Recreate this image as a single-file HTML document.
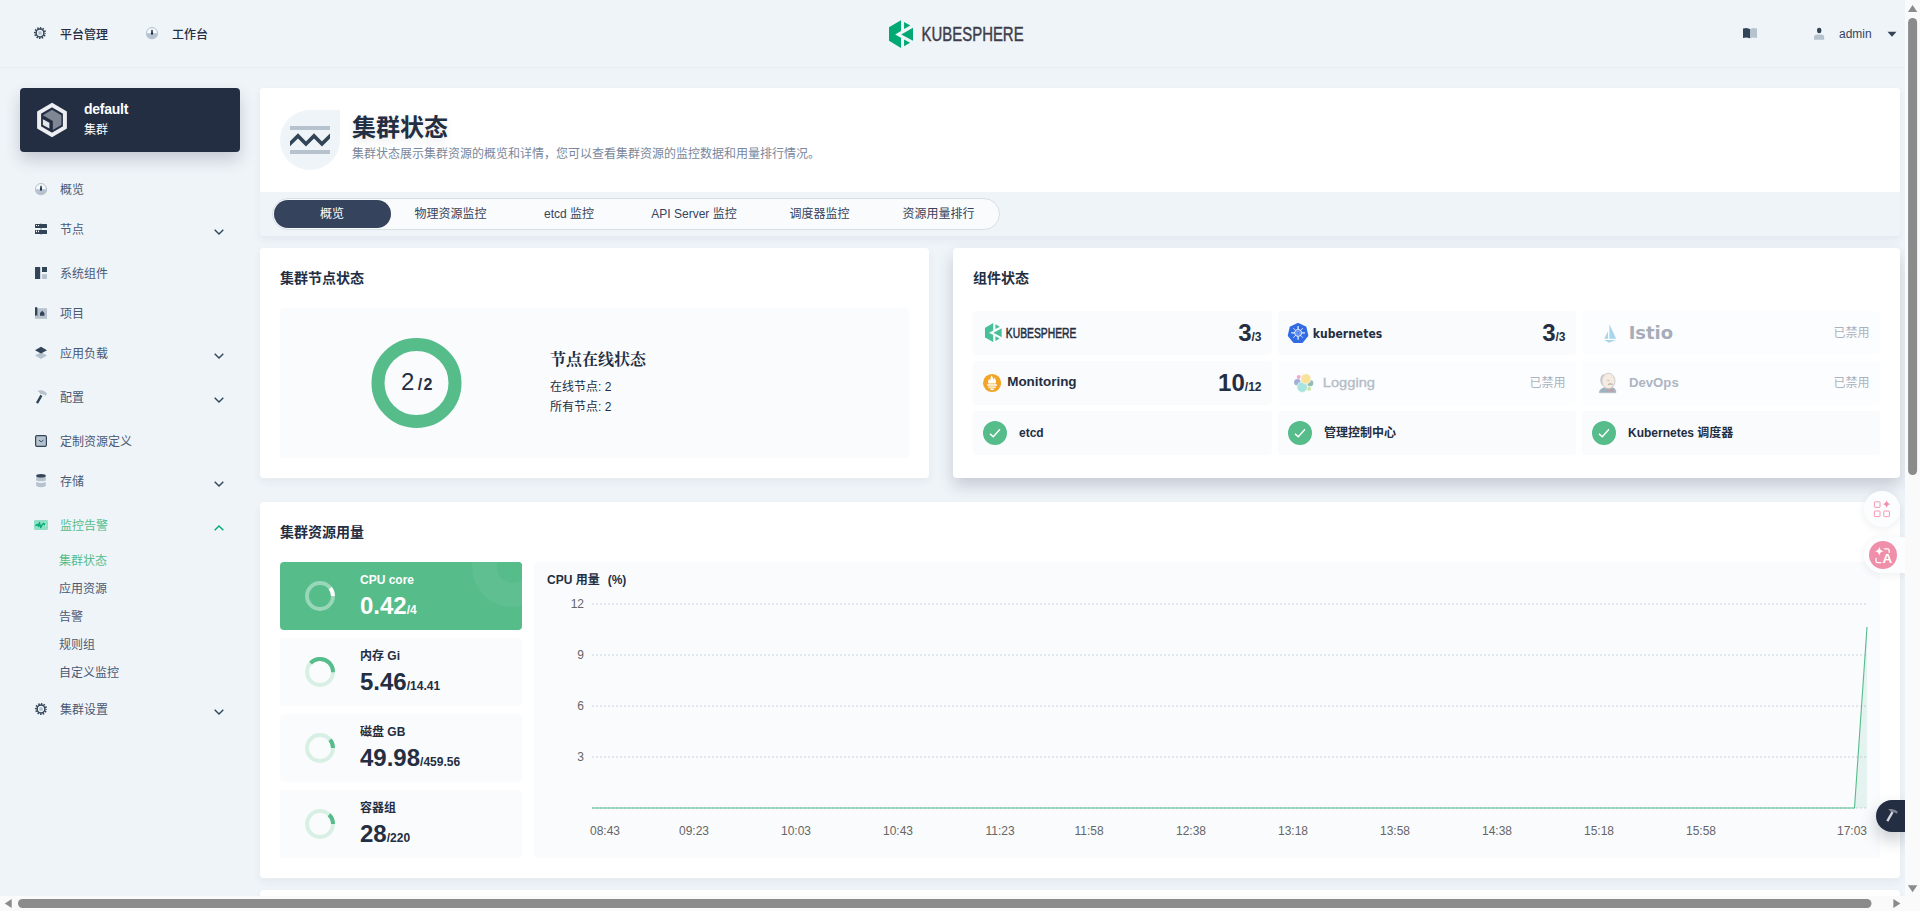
<!DOCTYPE html>
<html lang="zh">
<head>
<meta charset="utf-8">
<title>KubeSphere</title>
<style>
*{box-sizing:border-box;margin:0;padding:0}
html,body{width:1920px;height:911px;overflow:hidden}
body{background:#eff4f9;color:#242e42;font-family:"Liberation Sans","Noto Sans CJK SC",sans-serif;font-size:12px;line-height:20px;position:relative}
.abs{position:absolute}
svg{display:block}
/* header */
#hdr{position:absolute;left:0;top:0;width:1905px;height:68px;border-bottom:1px solid #e9eef4}
.hnav{position:absolute;top:25px;height:20px;font-weight:500;font-size:12px;color:#242e42;white-space:nowrap}
/* sidebar */
#cluster{position:absolute;left:20px;top:88px;width:220px;height:64px;border-radius:4px;background:#242e42;box-shadow:0 8px 16px 0 rgba(36,46,66,.2)}
.nav{position:absolute;left:60px;height:20px;font-size:12px;color:#4a5974;white-space:nowrap;font-weight:400}
.nav.sub{left:59px;color:#4a5974}
.nav.on{color:#55bc8a}
.nico{position:absolute;left:33px;width:16px;height:16px}
.chev{position:absolute;left:213px;width:12px;height:12px}
/* cards */
.card{position:absolute;background:#fff;border-radius:4px;box-shadow:0 4px 8px 0 rgba(36,46,66,.06)}
.ctitle{position:absolute;font-size:14px;font-weight:700;color:#242e42;line-height:20px;white-space:nowrap}
.lbox{position:absolute;background:#f9fbfd;border-radius:4px}
.t{position:absolute;white-space:nowrap}
.tab{top:5px;margin-left:-.5px;height:20px;line-height:20px;text-align:center;font-size:12px;color:#36435c}
</style>
</head>
<body>

<!-- ================= HEADER ================= -->
<svg width="0" height="0" style="position:absolute">
  <defs>
    <symbol id="kslogo" viewBox="9 6 24.2 28">
      <path fill="#00a971" d="M20.98 6.15L9 13.17V26.78L20.98 34V23.7L15.14 20.4L20.98 16.9Z"/>
      <path fill="#00a971" d="M24.06 7.9V14.9L30.3 11.5Z"/>
      <path fill="#00a971" d="M21.3 20.4L33.1 13.6V26.9Z"/>
      <path fill="#00a971" d="M24.06 25.5V32.3L30.07 28.8Z"/>
    </symbol>
    <symbol id="gear" viewBox="-8 -8 16 16">
      <circle r="2" fill="#b6c2cd"/>
      <circle r="3.9" fill="none" stroke="#324558" stroke-width="1.5"/>
      <circle r="5.1" fill="none" stroke="#324558" stroke-width="1.9" stroke-dasharray="1.4 1.27" stroke-dashoffset=".7"/>
    </symbol>
    <symbol id="dash" viewBox="-8 -8 16 16">
      <circle r="5.5" fill="#f5f8fb" stroke="#b6c2cd" stroke-width="1"/>
      <path d="M-6 0.2A6 6 0 0 0 6 0.2Z" fill="#b6c2cd"/>
      <path d="M-.6 -3.2h1.2l.5 3.9a1.1 1.1 0 0 1-2.2 0z" fill="#1f3350"/>
    </symbol>
  </defs>
</svg>
<div id="hdr">
  <svg class="abs" style="left:32px;top:25px" width="16" height="16"><use href="#gear"/></svg>
  <div class="hnav" style="left:60px">平台管理</div>
  <svg class="abs" style="left:144px;top:25px" width="16" height="16"><use href="#dash"/></svg>
  <div class="hnav" style="left:172px">工作台</div>
  <svg class="abs" style="left:889px;top:20px" width="24.2" height="28"><use href="#kslogo"/></svg>
  <svg class="abs" style="left:918px;top:20px" width="112" height="28"><text x="3.6" y="21.4" font-family="'Liberation Sans',sans-serif" font-size="19.8" fill="#3e3d49" stroke="#3e3d49" stroke-width=".45" textLength="102" lengthAdjust="spacingAndGlyphs">KUBESPHERE</text></svg>
  <svg class="abs" style="left:1742px;top:27px" width="16" height="12" viewBox="0 0 16 12"><path d="M1 1.6L4.5 1.1L8 1.9V11.3L4.5 10.6L1 11Z" fill="#324558"/><path d="M8 1.9L11.5 1.1L15 1.6V11L11.5 10.6L8 11.3Z" fill="#b6c2cd"/></svg>
  <svg class="abs" style="left:1811px;top:26px" width="16" height="16" viewBox="0 0 16 16"><rect x="6" y="1.8" width="4.4" height="5.4" rx="2.2" fill="#324558"/><path d="M3 13.7V11.5a3 3 0 0 1 3-3h4.2a3 3 0 0 1 3 3v2.2z" fill="#b6c2cd"/></svg>
  <div class="t" style="left:1839px;top:24px;font-size:12px;color:#36435c">admin</div>
  <svg class="abs" style="left:1887px;top:31px" width="10" height="6" viewBox="0 0 10 6"><path d="M.5 .7h9L5 5.8z" fill="#324558"/></svg>
</div>

<!-- ================= SIDEBAR ================= -->
<div id="cluster">
  <svg class="abs" style="left:0;top:0" width="80" height="64" viewBox="20 88 80 64">
    <path d="M52 105.1L64.9 112.55V127.45L52 134.9L39.1 127.45V112.55Z" fill="none" stroke="#eceef1" stroke-width="4" stroke-linejoin="miter"/>
    <path d="M52 109.8L61.4 115.2V124.9L52.8 129.9V121L42.8 115.3Z" fill="#7f8794"/>
    <path d="M42.9 119.3L49.4 122.8V128.6L42.9 124.9Z" fill="#e4e6ea"/>
  </svg>
  <div class="t" style="left:64px;top:11px;font-size:14px;font-weight:700;color:#fff;line-height:20px;letter-spacing:-.25px">default</div>
  <div class="t" style="left:64px;top:32px;font-size:12px;color:#fff;line-height:20px">集群</div>
</div>

<div id="side">
  <div class="nav" style="top:180px">概览</div>
  <div class="nav" style="top:220px">节点</div>
  <div class="nav" style="top:264px">系统组件</div>
  <div class="nav" style="top:304px">项目</div>
  <div class="nav" style="top:344px">应用负载</div>
  <div class="nav" style="top:388px">配置</div>
  <div class="nav" style="top:432px">定制资源定义</div>
  <div class="nav" style="top:472px">存储</div>
  <div class="nav on" style="top:516px">监控告警</div>
  <div class="nav sub on" style="top:551px">集群状态</div>
  <div class="nav sub" style="top:579px">应用资源</div>
  <div class="nav sub" style="top:607px">告警</div>
  <div class="nav sub" style="top:635px">规则组</div>
  <div class="nav sub" style="top:663px">自定义监控</div>
  <div class="nav" style="top:700px">集群设置</div>
  <svg class="abs" style="left:33px;top:181px" width="16" height="16"><use href="#dash"/></svg>
  <svg class="abs" style="left:33px;top:221px" width="16" height="16" viewBox="0 0 16 16"><rect x="7" y="2.2" width="2" height="11.6" fill="#b6c2cd"/><rect x="2" y="3" width="12" height="4" rx=".5" fill="#324558"/><rect x="2" y="9" width="12" height="4" rx=".5" fill="#324558"/><rect x="3" y="4" width="1" height="1" fill="#fff"/><rect x="5" y="4" width="1" height="1" fill="#fff"/><rect x="3" y="9.6" width="1" height="1.6" fill="#fff"/><rect x="5" y="9.6" width="1" height="1.6" fill="#fff"/></svg>
  <svg class="abs" style="left:33px;top:265px" width="16" height="16" viewBox="0 0 16 16"><rect x="2" y="2" width="5.2" height="12" fill="#324558"/><rect x="9" y="2" width="5" height="5" fill="#324558"/><rect x="9" y="9.2" width="5" height="4.8" fill="#b6c2cd"/></svg>
  <svg class="abs" style="left:33px;top:305px" width="16" height="16" viewBox="0 0 16 16"><rect x="2" y="3.2" width="12" height="10.6" fill="#b6c2cd"/><path d="M2 3.2a1.2 1.2 0 0 1 2.4 0V11.2a1.2 1.2 0 0 0-2.4 1z" fill="#324558"/><path d="M7 10.8V8l2.2-2.2L11.4 8v2.8z" fill="#324558"/></svg>
  <svg class="abs" style="left:33px;top:345px" width="16" height="16" viewBox="0 0 16 16"><path d="M2 10.4L8 7l6 3.4L8 13.9z" fill="#b6c2cd"/><path d="M2 5.2L8 1.8l6 3.4L8 8.6z" fill="#324558"/></svg>
  <svg class="abs" style="left:33px;top:389px" width="16" height="16" viewBox="0 0 16 16"><path d="M4.5 2.1C6 1.2 8 1 9.6 1.6C11.4 2.2 12.8 3.2 13.9 4.4L12.8 6.9C11.8 5.9 10.6 5.4 9.4 5.3L7.4 5C6.8 3.8 5.8 2.9 4.5 2.1Z" fill="#b6c2cd"/><path d="M8.4 6.4L4 14.2" stroke="#324558" stroke-width="2.4" fill="none"/></svg>
  <svg class="abs" style="left:33px;top:433px" width="16" height="16" viewBox="0 0 16 16"><rect x="2.6" y="2.6" width="10.8" height="10.8" rx="1.4" fill="#b6c2cd" stroke="#324558" stroke-width="1.2"/><path d="M6 7.2L8.2 8.8L10.4 7.2" fill="none" stroke="#324558" stroke-width="1"/></svg>
  <svg class="abs" style="left:33px;top:473px" width="16" height="16" viewBox="0 0 16 16"><path d="M3.2 2.8V7.4Q8 9.2 12.8 7.4V2.8Z" fill="#b6c2cd"/><path d="M3.2 9Q8 10.8 12.8 9V13Q8 15.4 3.2 13Z" fill="#b6c2cd"/><ellipse cx="8" cy="2.8" rx="4.8" ry="1.8" fill="#324558"/></svg>
  <svg class="abs" style="left:33px;top:517px" width="16" height="16" viewBox="0 0 16 16"><rect x="1" y="3" width="14" height="10" rx="1.2" fill="#90e0c5"/><path d="M2.8 8.5L4.4 7.4L5.6 9.3L6.5 5.4L7.6 10.7L8.8 8.4L10.4 6.3L11.8 7.8" fill="none" stroke="#00aa72" stroke-width="1.3" stroke-linejoin="round" stroke-linecap="round"/><circle cx="12.6" cy="8.4" r=".6" fill="#fff"/></svg>
  <svg class="abs" style="left:33px;top:701px" width="16" height="16"><use href="#gear"/></svg>
  <svg class="abs" style="left:213px;top:228px" width="12" height="8" viewBox="0 0 12 8"><path d="M1.7 1.8L6 6.1L10.3 1.8" fill="none" stroke="#324558" stroke-width="1.4"/></svg>
  <svg class="abs" style="left:213px;top:352px" width="12" height="8" viewBox="0 0 12 8"><path d="M1.7 1.8L6 6.1L10.3 1.8" fill="none" stroke="#324558" stroke-width="1.4"/></svg>
  <svg class="abs" style="left:213px;top:396px" width="12" height="8" viewBox="0 0 12 8"><path d="M1.7 1.8L6 6.1L10.3 1.8" fill="none" stroke="#324558" stroke-width="1.4"/></svg>
  <svg class="abs" style="left:213px;top:480px" width="12" height="8" viewBox="0 0 12 8"><path d="M1.7 1.8L6 6.1L10.3 1.8" fill="none" stroke="#324558" stroke-width="1.4"/></svg>
  <svg class="abs" style="left:213px;top:708px" width="12" height="8" viewBox="0 0 12 8"><path d="M1.7 1.8L6 6.1L10.3 1.8" fill="none" stroke="#324558" stroke-width="1.4"/></svg>
  <svg class="abs" style="left:213px;top:524px" width="12" height="8" viewBox="0 0 12 8"><path d="M1.7 6.2L6 1.9L10.3 6.2" fill="none" stroke="#00aa72" stroke-width="1.4"/></svg>
</div>

<!-- ================= MAIN ================= -->
<div class="card" id="banner" style="left:260px;top:88px;width:1640px;height:148px;background:#eff4f9">
  <div class="abs" style="left:0;top:0;width:1640px;height:104px;background:#fff;border-radius:4px 4px 0 0"></div>
  <div class="abs" style="left:20px;top:22px;width:60px;height:60px;border-radius:30px 0 30px 30px;background:#eff4f9">
    <svg class="abs" style="left:10px;top:10px" width="40" height="40" viewBox="290 120 40 40"><rect x="290" y="126" width="40" height="4" fill="#b6c2cd"/><rect x="290" y="150" width="40" height="4" fill="#b6c2cd"/><path d="M288 145.6L298 135.9L306 143.9L314 135.9L322 143.9L332 134" fill="none" stroke="#324558" stroke-width="3.6"/></svg>
  </div>
  <div class="t" style="left:92px;top:24px;font-size:24px;line-height:32px;font-weight:700;color:#242e42;text-shadow:0 4px 8px rgba(36,46,66,.1)">集群状态</div>
  <div class="t" style="left:92px;top:56px;font-size:12px;line-height:20px;color:#79879c">集群状态展示集群资源的概览和详情，您可以查看集群资源的监控数据和用量排行情况。</div>
  <div class="abs" id="tabs" style="left:12px;top:110px;width:728px;height:32px;border:1px solid #d8dee5;border-radius:16px;background:#f9fbfd">
    <div class="abs" style="left:1px;top:1px;width:117px;height:28px;border-radius:14px;background:#36435c"></div>
    <div class="t tab" style="left:1px;width:117px;color:#fff">概览</div>
    <div class="t tab" style="left:118px;width:120px">物理资源监控</div>
    <div class="t tab" style="left:238px;width:117px">etcd 监控</div>
    <div class="t tab" style="left:355px;width:133px">API Server 监控</div>
    <div class="t tab" style="left:488px;width:118px">调度器监控</div>
    <div class="t tab" style="left:606px;width:120px">资源用量排行</div>
  </div>
</div>

<div class="card" id="c1" style="left:260px;top:248px;width:669px;height:230px">
  <div class="ctitle" style="left:20px;top:20px">集群节点状态</div>
  <div class="lbox" style="left:20px;top:60px;width:629px;height:150px"></div>
  <svg class="abs" style="left:106px;top:85px" width="100" height="100" viewBox="0 0 100 100"><circle cx="50.5" cy="50" r="38.5" fill="none" stroke="#55bc8a" stroke-width="13"/></svg>
  <div class="t" style="left:141px;top:119px;line-height:30px;color:#242e42"><span style="font-size:24px">2</span><span style="font-size:16px;font-weight:700;letter-spacing:1.2px;margin-left:3.5px">/2</span></div>
  <div class="t" style="left:290px;top:100px;font-size:16px;line-height:24px;font-weight:700;color:#242e42;font-family:'Liberation Serif','Noto Serif CJK SC',serif">节点在线状态</div>
  <div class="t" style="left:290px;top:129px;font-size:12px;line-height:20px;color:#242e42">在线节点: 2</div>
  <div class="t" style="left:290px;top:149px;font-size:12px;line-height:20px;color:#242e42">所有节点: 2</div>
</div>

<div class="card" id="c2" style="left:953px;top:248px;width:947px;height:230px;box-shadow:0 8px 16px 0 rgba(36,46,66,.2)">
  <div class="ctitle" style="left:20px;top:20px">组件状态</div>
  <div class="lbox" style="left:20px;top:63px;width:299px;height:44px"><svg class="abs" style="left:0;top:0" width="150" height="44" viewBox="973 311 150 44"><svg x="984.7" y="323" width="17.2" height="19.1" viewBox="9 6 24.2 28" preserveAspectRatio="none"><g opacity=".72"><use href="#kslogo" x="9" y="6" width="24.2" height="28"/></g></svg><text x="1005.8" y="337.6" font-family="'Liberation Sans',sans-serif" font-size="14.2" fill="#242e42" stroke="#242e42" stroke-width=".5" textLength="70.6" lengthAdjust="spacingAndGlyphs">KUBESPHERE</text></svg><div class="t" style="right:10.5px;top:6px;height:32px;line-height:32px;font-weight:700;color:#242e42"><span style="font-size:24px">3</span><span style="font-size:12px">/3</span></div></div>
  <div class="lbox" style="left:325px;top:63px;width:298px;height:44px"><svg class="abs" style="left:0;top:0" width="150" height="44" viewBox="1278 311 150 44"><polygon points="1298.05,323.90 1305.48,327.48 1307.31,335.51 1302.17,341.96 1293.93,341.96 1288.79,335.51 1290.62,327.48" fill="#326ce5" stroke="#326ce5" stroke-width="2" stroke-linejoin="round"/><circle cx="1298.1" cy="332.9" r="3.5" fill="#5b89ec" stroke="#fff" stroke-opacity=".92" stroke-width=".9"/><circle cx="1298.1" cy="332.9" r="1.5" fill="#4377e8" stroke="#a9c1f5" stroke-width=".5"/><path d="M1298.10 329.30L1298.10 326.10" stroke="#fff" stroke-opacity=".92" stroke-width="1.25"/><path d="M1300.65 330.35L1302.91 328.09" stroke="#fff" stroke-opacity=".92" stroke-width="0.8"/><path d="M1301.70 332.90L1304.90 332.90" stroke="#fff" stroke-opacity=".92" stroke-width="1.25"/><path d="M1300.65 335.45L1302.91 337.71" stroke="#fff" stroke-opacity=".92" stroke-width="0.8"/><path d="M1298.10 336.50L1298.10 339.70" stroke="#fff" stroke-opacity=".92" stroke-width="1.25"/><path d="M1295.55 335.45L1293.29 337.71" stroke="#fff" stroke-opacity=".92" stroke-width="0.8"/><path d="M1294.50 332.90L1291.30 332.90" stroke="#fff" stroke-opacity=".92" stroke-width="1.25"/><path d="M1295.55 330.35L1293.29 328.09" stroke="#fff" stroke-opacity=".92" stroke-width="0.8"/><text x="1312.8" y="337.7" font-family="'DejaVu Sans',sans-serif" font-weight="700" font-size="12" fill="#242e42" textLength="69.4" lengthAdjust="spacingAndGlyphs">kubernetes</text></svg><div class="t" style="right:10.5px;top:6px;height:32px;line-height:32px;font-weight:700;color:#242e42"><span style="font-size:24px">3</span><span style="font-size:12px">/3</span></div></div>
  <div class="lbox" style="left:629px;top:63px;width:298px;height:44px;background:#fcfdfe"><svg class="abs" style="left:0;top:0" width="150" height="44" viewBox="1582 311 150 44"><g fill="#a9d5ea"><path d="M1609.4 324.3V338.7H1616.2Z"/><path d="M1608 331.2V338.7H1604.2Z"/><path d="M1604.2 339.9H1616.2L1608.8 342.7Z"/></g><text x="1628.7" y="339" font-family="'DejaVu Sans',sans-serif" font-weight="700" font-size="17.1" fill="#a6acb8" textLength="44.4" lengthAdjust="spacingAndGlyphs">Istio</text></svg><div class="t" style="right:10.5px;top:12px;line-height:20px;font-size:12px;color:#abb2bc">已禁用</div></div>
  <div class="lbox" style="left:20px;top:113px;width:299px;height:44px"><svg class="abs" style="left:0;top:0" width="150" height="44" viewBox="973 361 150 44"><circle cx="992.1" cy="383" r="9.1" fill="#f2a427"/><g fill="#fff"><path d="M991.6 375.6C992.6 377.4 993.6 378.2 993.4 379.8C994.2 379.2 994.4 378.4 994.3 377.6C995.8 379.4 996.4 381 995.8 383.4H988.4C987.8 381.4 988.2 380 989.3 378.8C989.4 379.8 989.8 380.4 990.4 380.8C990.2 378.8 990.6 377.2 991.6 375.6Z"/><rect x="987.2" y="384.2" width="9.8" height="1.5" rx=".3"/><rect x="988.2" y="386.5" width="7.8" height="1.3" rx=".3"/><path d="M989.6 388.6H994.6C994 389.8 993 390.3 992.1 390.3C991.2 390.3 990.2 389.8 989.6 388.6Z"/></g><text x="1007.2" y="386.2" font-family="'Liberation Sans',sans-serif" font-weight="700" font-size="13.2" fill="#242e42" textLength="69.4" lengthAdjust="spacingAndGlyphs">Monitoring</text></svg><div class="t" style="right:10.5px;top:6px;height:32px;line-height:32px;font-weight:700;color:#242e42"><span style="font-size:24px">10</span><span style="font-size:12px">/12</span></div></div>
  <div class="lbox" style="left:325px;top:113px;width:298px;height:44px;background:#fcfdfe"><svg class="abs" style="left:0;top:0" width="150" height="44" viewBox="1278 361 150 44"><circle cx="1298.75" cy="376.9" r="2" fill="#f5a8cf"/><circle cx="1297.4" cy="382.3" r="3.3" fill="#a3b0d9"/><circle cx="1310.2" cy="383.2" r="3.1" fill="#93bdb2"/><circle cx="1308.9" cy="388.8" r="2.1" fill="#c8e6a0"/><circle cx="1302.2" cy="387.1" r="5.3" fill="#a9e4de" stroke="#f9fbfd" stroke-width=".6"/><circle cx="1305.9" cy="378.8" r="5.1" fill="#f9e29c" stroke="#f9fbfd" stroke-width=".6"/><text x="1322.8" y="386.8" font-family="'Liberation Sans',sans-serif" font-size="13.7" fill="#b5bcc6" stroke="#b5bcc6" stroke-width=".35" textLength="52.2" lengthAdjust="spacingAndGlyphs">Logging</text></svg><div class="t" style="right:10.5px;top:12px;line-height:20px;font-size:12px;color:#abb2bc">已禁用</div></div>
  <div class="lbox" style="left:629px;top:113px;width:298px;height:44px;background:#fcfdfe"><svg class="abs" style="left:0;top:0" width="150" height="44" viewBox="1582 361 150 44"><path d="M1599.2 392.8C1599.4 389.6 1602 388 1605 387.6H1612C1614.6 388 1616 389.6 1616 392.8Z" fill="#9fb2c2" stroke="#b9b9b9" stroke-width=".5"/><ellipse cx="1603.6" cy="380" rx="3.4" ry="5.8" fill="#c9ccd2"/><ellipse cx="1608.4" cy="381" rx="6.6" ry="7.8" fill="#f5ebe0" stroke="#bdbdbd" stroke-width=".7"/><path d="M1608 384.6Q1610.4 383.2 1612.8 384.6" fill="none" stroke="#b9b2ac" stroke-width="1.1"/><path d="M1607.2 380.2L1609.6 380.8" stroke="#b9b2ac" stroke-width=".7"/><path d="M1607 389L1609.6 390.4L1607 391.8ZM1612.4 389L1609.6 390.4L1612.4 391.8Z" fill="#f08a8a"/><text x="1629" y="386.8" font-family="'Liberation Sans',sans-serif" font-weight="700" font-size="12.5" fill="#adb5c4" textLength="49.7" lengthAdjust="spacingAndGlyphs">DevOps</text></svg><div class="t" style="right:10.5px;top:12px;line-height:20px;font-size:12px;color:#abb2bc">已禁用</div></div>
  <div class="lbox" style="left:20px;top:163px;width:299px;height:44px"><div class="abs" style="left:10px;top:10px;width:24px;height:24px;border-radius:50%;background:#55bc8a"><svg width="24" height="24" viewBox="0 0 24 24"><path d="M7 12.9L10.3 15.8L17 8.2" fill="none" stroke="#fff" stroke-width="1.4"/></svg></div><div class="t" style="left:46px;top:12px;line-height:20px;font-size:12px;font-weight:700;color:#242e42">etcd</div></div>
  <div class="lbox" style="left:325px;top:163px;width:298px;height:44px"><div class="abs" style="left:10px;top:10px;width:24px;height:24px;border-radius:50%;background:#55bc8a"><svg width="24" height="24" viewBox="0 0 24 24"><path d="M7 12.9L10.3 15.8L17 8.2" fill="none" stroke="#fff" stroke-width="1.4"/></svg></div><div class="t" style="left:46px;top:12px;line-height:20px;font-size:12px;font-weight:700;color:#242e42">管理控制中心</div></div>
  <div class="lbox" style="left:629px;top:163px;width:298px;height:44px"><div class="abs" style="left:10px;top:10px;width:24px;height:24px;border-radius:50%;background:#55bc8a"><svg width="24" height="24" viewBox="0 0 24 24"><path d="M7 12.9L10.3 15.8L17 8.2" fill="none" stroke="#fff" stroke-width="1.4"/></svg></div><div class="t" style="left:46px;top:12px;line-height:20px;font-size:12px;font-weight:700;color:#242e42">Kubernetes 调度器</div></div>
  
</div>

<div class="card" id="c3" style="left:260px;top:502px;width:1640px;height:376px">
  <div class="ctitle" style="left:20px;top:20px">集群资源用量</div>
  <div class="abs" style="left:20px;top:60px;width:242px;height:68px;border-radius:4px;background:#55bc8a"><div class="abs" style="left:0;top:0;width:242px;height:68px;overflow:hidden;border-radius:4px"><div class="abs" style="left:192px;top:-35px;width:80px;height:80px;border-radius:50%;background:rgba(255,255,255,.06)"></div><div class="abs" style="left:216.5px;top:-10.5px;width:31px;height:31px;border-radius:50%;background:#55bc8a"></div></div><svg class="abs" style="left:24px;top:18px" width="32" height="32" viewBox="0 0 32 32"><circle cx="16" cy="16" r="13" fill="none" stroke="rgba(255,255,255,.4)" stroke-width="4"/><circle cx="16" cy="16" r="13" fill="none" stroke="#fff" stroke-width="4" stroke-dasharray="8.58 81.68" transform="rotate(-37.8 16 16)"/></svg><div class="t" style="left:80px;top:8px;font-size:12px;line-height:20px;font-weight:700;color:#fff">CPU core</div><div class="t" style="left:80px;top:28px;height:32px;line-height:32px;font-weight:700;color:#fff"><span style="font-size:24px">0.42</span><span style="font-size:12px">/4</span></div></div>
  <div class="abs" style="left:20px;top:136px;width:242px;height:68px;border-radius:4px;background:#f9fbfd"><svg class="abs" style="left:24px;top:18px" width="32" height="32" viewBox="0 0 32 32"><circle cx="16" cy="16" r="13" fill="none" stroke="#d8f0e4" stroke-width="4"/><circle cx="16" cy="16" r="13" fill="none" stroke="#55bc8a" stroke-width="4" stroke-dasharray="30.96 81.68" transform="rotate(-136.5 16 16)"/></svg><div class="t" style="left:80px;top:8px;font-size:12px;line-height:20px;font-weight:700;color:#242e42">内存 Gi</div><div class="t" style="left:80px;top:28px;height:32px;line-height:32px;font-weight:700;color:#242e42"><span style="font-size:24px">5.46</span><span style="font-size:12px">/14.41</span></div></div>
  <div class="abs" style="left:20px;top:212px;width:242px;height:68px;border-radius:4px;background:#f9fbfd"><svg class="abs" style="left:24px;top:18px" width="32" height="32" viewBox="0 0 32 32"><circle cx="16" cy="16" r="13" fill="none" stroke="#d8f0e4" stroke-width="4"/><circle cx="16" cy="16" r="13" fill="none" stroke="#55bc8a" stroke-width="4" stroke-dasharray="8.90 81.68" transform="rotate(-39.2 16 16)"/></svg><div class="t" style="left:80px;top:8px;font-size:12px;line-height:20px;font-weight:700;color:#242e42">磁盘 GB</div><div class="t" style="left:80px;top:28px;height:32px;line-height:32px;font-weight:700;color:#242e42"><span style="font-size:24px">49.98</span><span style="font-size:12px">/459.56</span></div></div>
  <div class="abs" style="left:20px;top:288px;width:242px;height:68px;border-radius:4px;background:#f9fbfd"><svg class="abs" style="left:24px;top:18px" width="32" height="32" viewBox="0 0 32 32"><circle cx="16" cy="16" r="13" fill="none" stroke="#d8f0e4" stroke-width="4"/><circle cx="16" cy="16" r="13" fill="none" stroke="#55bc8a" stroke-width="4" stroke-dasharray="10.37 81.68" transform="rotate(-45.7 16 16)"/></svg><div class="t" style="left:80px;top:8px;font-size:12px;line-height:20px;font-weight:700;color:#242e42">容器组</div><div class="t" style="left:80px;top:28px;height:32px;line-height:32px;font-weight:700;color:#242e42"><span style="font-size:24px">28</span><span style="font-size:12px">/220</span></div></div>
  <div class="lbox" id="chart" style="left:274px;top:60px;width:1346px;height:296px">
<div class="t" style="left:13px;top:8px;font-size:12px;line-height:20px;font-weight:700;color:#242e42">CPU 用量<span style="margin-left:8px">(%)</span></div>
<svg class="abs" style="left:0;top:0" width="1346" height="296" viewBox="0 0 1346 296" font-family="'Liberation Sans',sans-serif" font-size="12" fill="#666">
<line x1="58" y1="42" x2="1332" y2="42" stroke="#e1e7ee" stroke-width="2" stroke-dasharray="2 2"/><text x="50" y="45.5" text-anchor="end">12</text>
<line x1="58" y1="93" x2="1332" y2="93" stroke="#e1e7ee" stroke-width="2" stroke-dasharray="2 2"/><text x="50" y="96.5" text-anchor="end">9</text>
<line x1="58" y1="144" x2="1332" y2="144" stroke="#e1e7ee" stroke-width="2" stroke-dasharray="2 2"/><text x="50" y="147.5" text-anchor="end">6</text>
<line x1="58" y1="195" x2="1332" y2="195" stroke="#e1e7ee" stroke-width="2" stroke-dasharray="2 2"/><text x="50" y="198.5" text-anchor="end">3</text>
<line x1="58" y1="246" x2="1332" y2="246" stroke="#e1e7ee" stroke-width="2" stroke-dasharray="2 2"/><path d="M58 246H1320.5L1333 65V246Z" fill="#55bc8a" fill-opacity=".12"/><path d="M58 246H1320.5L1333 65" fill="none" stroke="#55bc8a" stroke-width="1.1"/>
<text x="71" y="273" text-anchor="middle">08:43</text><text x="160" y="273" text-anchor="middle">09:23</text><text x="262" y="273" text-anchor="middle">10:03</text><text x="364" y="273" text-anchor="middle">10:43</text><text x="466" y="273" text-anchor="middle">11:23</text><text x="555" y="273" text-anchor="middle">11:58</text><text x="657" y="273" text-anchor="middle">12:38</text><text x="759" y="273" text-anchor="middle">13:18</text><text x="861" y="273" text-anchor="middle">13:58</text><text x="963" y="273" text-anchor="middle">14:38</text><text x="1065" y="273" text-anchor="middle">15:18</text><text x="1167" y="273" text-anchor="middle">15:58</text><text x="1318" y="273" text-anchor="middle">17:03</text>
</svg></div>
</div>

<div class="card" id="c4" style="left:260px;top:890px;width:1640px;height:60px"></div>

<!-- ================= FLOATING ================= -->
<div class="abs" style="left:1864px;top:491px;width:36px;height:36px;border-radius:50%;background:#fcfdfe;box-shadow:0 2px 8px rgba(36,46,66,.08)">
  <svg width="36" height="36" viewBox="1864 491 36 36" fill="none" stroke="#f08fa9" stroke-width=".9"><rect x="1874.4" y="501.8" width="5.6" height="5.6" rx=".6"/><rect x="1874.4" y="511" width="5.6" height="5.6" rx=".6"/><rect x="1883.8" y="511" width="5.6" height="5.6" rx=".6"/><path d="M1886.6 500.2Q1887.3 503.4 1890.5 504.1Q1887.3 504.8 1886.6 508Q1885.9 504.8 1882.7 504.1Q1885.9 503.4 1886.6 500.2Z" fill="#f08fa9" stroke="none"/></svg>
</div>
<div class="abs" style="left:1864px;top:537px;width:41px;height:36px;border-radius:18px 0 0 18px;background:#fcfdfe;box-shadow:0 2px 8px rgba(36,46,66,.08)">
  <svg width="41" height="36" viewBox="1864 537 41 36"><circle cx="1883" cy="555" r="14" fill="#f08fa9"/><path d="M1879.3 546.8Q1879.8 550.7 1883.7 551.2Q1879.8 551.7 1879.3 555.6Q1878.8 551.7 1874.9 551.2Q1878.8 550.7 1879.3 546.8Z" fill="#fff"/><path d="M1884.4 548.8H1887.4Q1889.2 548.8 1889.2 550.6V552.4M1876 558.4V560.9Q1876 562.7 1877.8 562.7H1880.8" fill="none" stroke="#fff" stroke-width="1.3" stroke-linecap="round"/><text x="1887.4" y="563.3" text-anchor="middle" font-family="'Liberation Sans',sans-serif" font-weight="700" font-size="13.4" fill="#fff">A</text></svg>
</div>
<div class="abs" style="left:1876px;top:800px;width:29px;height:32px;border-radius:16px 0 0 16px;background:#242e42;box-shadow:0 8px 16px 0 rgba(36,46,66,.25)">
  <svg width="29" height="32" viewBox="1876 800 29 32"><path d="M1888.2 809.4C1891.4 808.4 1894.6 809.2 1897.8 811.8L1896.8 813.8C1895.4 812.6 1894 812.2 1892.6 812.2L1891 812C1890.2 810.8 1889.2 810 1888.2 809.4Z" fill="#7f8794"/><path d="M1892.5 812.2L1887.3 821.2" stroke="#d5d8de" stroke-width="2.3" fill="none"/></svg>
</div>

<!-- ================= SCROLLBARS ================= -->
<div class="abs" id="vsb" style="left:1905px;top:0;width:15px;height:896px;background:#fafafa">
  <svg width="15" height="896" viewBox="0 0 15 896"><path d="M2.9 11.9L7.6 5L12.3 11.9Z" fill="#8b8b8b"/><rect x="3.1" y="18" width="9" height="457" rx="4.5" fill="#8b8b8b"/><path d="M2.9 885.3H12.3L7.6 892.2Z" fill="#8b8b8b"/></svg>
</div>
<div class="abs" id="hsb" style="left:0;top:896px;width:1920px;height:15px;background:#fafafa">
  <svg width="1920" height="15" viewBox="0 0 1920 15"><path d="M11.7 2.9V12.1L4.8 7.5Z" fill="#8b8b8b"/><rect x="18" y="3" width="1853.5" height="9" rx="4.5" fill="#8b8b8b"/><path d="M1893.4 2.9V12.1L1900.4 7.5Z" fill="#8b8b8b"/></svg>
</div>

</body>
</html>
